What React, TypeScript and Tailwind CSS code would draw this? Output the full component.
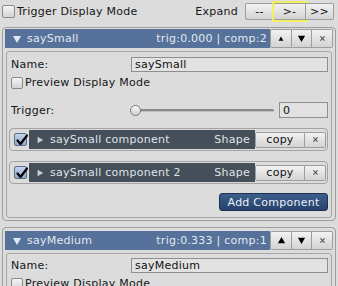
const Check = ({ checked = false, size = 13 }: { checked?: boolean; size?: number }) => (
  <div
    className={`relative shrink-0 rounded-[2px] border ${
      checked
        ? "border-[#5d6f88] bg-gradient-to-b from-[#c3d4ec] to-[#8ea8cc]"
        : "border-[#8a8a8a] bg-gradient-to-b from-[#f4f4f4] to-[#d4d4d4]"
    }`}
    style={{ width: size, height: size }}
  >
    {checked && (
      <svg viewBox="0 0 14 14" className="absolute left-[0px] top-[-1px] w-[14px] h-[14px]">
        <path d="M2.5 7.5 L5.5 11 L12 2.5" fill="none" stroke="#000" strokeWidth="2.2" strokeLinecap="round" strokeLinejoin="round" />
      </svg>
    )}
  </div>
);

const Btn = ({ children, className = "" }: { children: React.ReactNode; className?: string }) => (
  <div
    className={`flex items-center justify-center border border-[#9d9d9d] bg-gradient-to-b from-[#f2f2f2] to-[#d3d3d3] text-[#111] ${className}`}
  >
    {children}
  </div>
);

const Tri = ({ down = false, small = false }: { down?: boolean; small?: boolean }) => (
  <svg viewBox="0 0 10 10" className={small ? "w-[6px] h-[6px]" : "w-[9px] h-[9px]"}>
    <path d={down ? "M1 2 L9 2 L5 9 Z" : "M1 8 L9 8 L5 1 Z"} fill="#000" />
  </svg>
);

const Cross = () => (
  <svg viewBox="0 0 10 10" className="w-[7px] h-[7px]">
    <path d="M2 2 L8 8 M8 2 L2 8" stroke="#555" strokeWidth="1.6" />
  </svg>
);

const Header = ({ name, stats, first }: { name: string; stats: string; first?: boolean }) => (
  <div className="flex h-[19px]">
    <div className="flex-1 flex items-center bg-[#56729a] text-[#e3e9f1] pl-[7px] pr-[3px]">
      <svg viewBox="0 0 10 10" className="w-[10px] h-[10px] mr-[5px]">
        <path d="M1 2 L9 2 L5 9 Z" fill="#e3e9f1" />
      </svg>
      <span>{name}</span>
      <span className="ml-auto">{stats}</span>
    </div>
    <Btn className="w-[22px] rounded-l-[2px]">
      <Tri small={first} />
    </Btn>
    <Btn className="w-[20px] border-l-0">
      <Tri down />
    </Btn>
    <Btn className="w-[21px] border-l-0 rounded-r-[2px]">
      <Cross />
    </Btn>
  </div>
);

const Field = ({ value, className = "" }: { value: string; className?: string }) => (
  <div className={`flex items-center border border-[#8f8f8f] bg-[#e2e2e2] pl-[3px] text-[#111] ${className}`}>{value}</div>
);

const ComponentRow = ({ name }: { name: string }) => (
  <div className="flex items-center rounded-[4px] border border-[#a3a3a3] py-[1px] pl-[4px] pr-[1px]">
    <Check checked />
    <div className="ml-[2px] flex-1 h-[19px] flex items-center bg-[#454f59] text-[#dfe4ea] pl-[7px] pr-[5px]">
      <svg viewBox="0 0 10 10" className="w-[8px] h-[8px] mr-[6px]">
        <path d="M2 1 L9 5 L2 9 Z" fill="#c9ced4" />
      </svg>
      <span>{name}</span>
      <span className="ml-auto">Shape</span>
    </div>
    <Btn className="w-[50px] h-[16px] rounded-l-[2px]">copy</Btn>
    <Btn className="w-[21px] h-[16px] border-l-0 rounded-r-[2px]">
      <Cross />
    </Btn>
  </div>
);

export default function App() {
  return (
    <div className="w-[338px] h-[286px] overflow-hidden bg-[#dcdcdc] text-[11px] leading-none tracking-[0.25px] text-[#161616] font-['DejaVu_Sans',Verdana,sans-serif]">
      <div className="flex items-center h-[23px] pl-[2px] pr-[4px]">
        <Check />
        <span className="ml-[2px]">Trigger Display Mode</span>
        <span className="ml-auto mr-[7px]">Expand</span>
        <div className="flex">
          <Btn className="w-[29px] h-[17px] rounded-l-[2px]">--</Btn>
          <Btn className="w-[32px] h-[17px] border-l-0 outline-2 outline-[#f3ef62]">&gt;-</Btn>
          <Btn className="w-[28px] h-[17px] border-l-0 rounded-r-[2px]">&gt;&gt;</Btn>
        </div>
      </div>

      <div className="mx-[2px] mt-[4px] rounded-[4px] border border-[#9e9e9e] px-[2px] pt-[1px] pb-[2px]">
        <Header name="saySmall" stats="trig:0.000 | comp:2" first />
        <div className="mt-[3px] mx-[1px] rounded-[3px] border border-[#a6a6a6] pl-[2px] pr-[3px] pt-[5px] pb-[6px]">
          <div className="flex items-center h-[15px]">
            <span className="w-[122px] pl-[2px]">Name:</span>
            <Field value="saySmall" className="flex-1 h-[15px]" />
          </div>
          <div className="flex items-center h-[13px] mt-[4px] pl-[2px]">
            <Check size={12} />
            <span className="ml-[2px]">Preview Display Mode</span>
          </div>
          <div className="flex items-center h-[16px] mt-[13px]">
            <span className="w-[121px] pl-[2px]">Trigger:</span>
            <div className="relative flex-1 h-[16px] flex items-center">
              <div className="w-full h-[3px] rounded-full bg-[#8b8b8b] border-b border-[#bdbdbd]" />
              <div className="absolute left-[0px] top-[3px] w-[11px] h-[11px] rounded-full border border-[#7a7a7a] bg-gradient-to-b from-[#fafafa] to-[#cfcfcf]" />
            </div>
            <Field value="0" className="ml-[5px] w-[49px] h-[16px]" />
          </div>
          <div className="mt-[10px]">
            <ComponentRow name="saySmall component" />
          </div>
          <div className="mt-[10px]">
            <ComponentRow name="saySmall component 2" />
          </div>
          <div className="flex justify-end mt-[9px]">
            <div className="w-[109px] h-[18px] flex items-center justify-center rounded-[3px] border border-[#1d3152] bg-gradient-to-b from-[#3d5e8c] to-[#27426b] text-[#e9eef5]">
              Add Component
            </div>
          </div>
        </div>
      </div>

      <div className="mx-[2px] mt-[6px] rounded-[4px] border border-[#9e9e9e] px-[2px] pt-[3px] pb-[2px]">
        <Header name="sayMedium" stats="trig:0.333 | comp:1" />
        <div className="mt-[3px] mx-[1px] rounded-[3px] border border-[#a6a6a6] pl-[2px] pr-[3px] pt-[4px] pb-[6px]">
          <div className="flex items-center h-[15px]">
            <span className="w-[122px] pl-[2px]">Name:</span>
            <Field value="sayMedium" className="flex-1 h-[15px]" />
          </div>
          <div className="flex items-center h-[13px] mt-[4px] pl-[2px]">
            <Check size={12} />
            <span className="ml-[2px]">Preview Display Mode</span>
          </div>
        </div>
      </div>
    </div>
  );
}
